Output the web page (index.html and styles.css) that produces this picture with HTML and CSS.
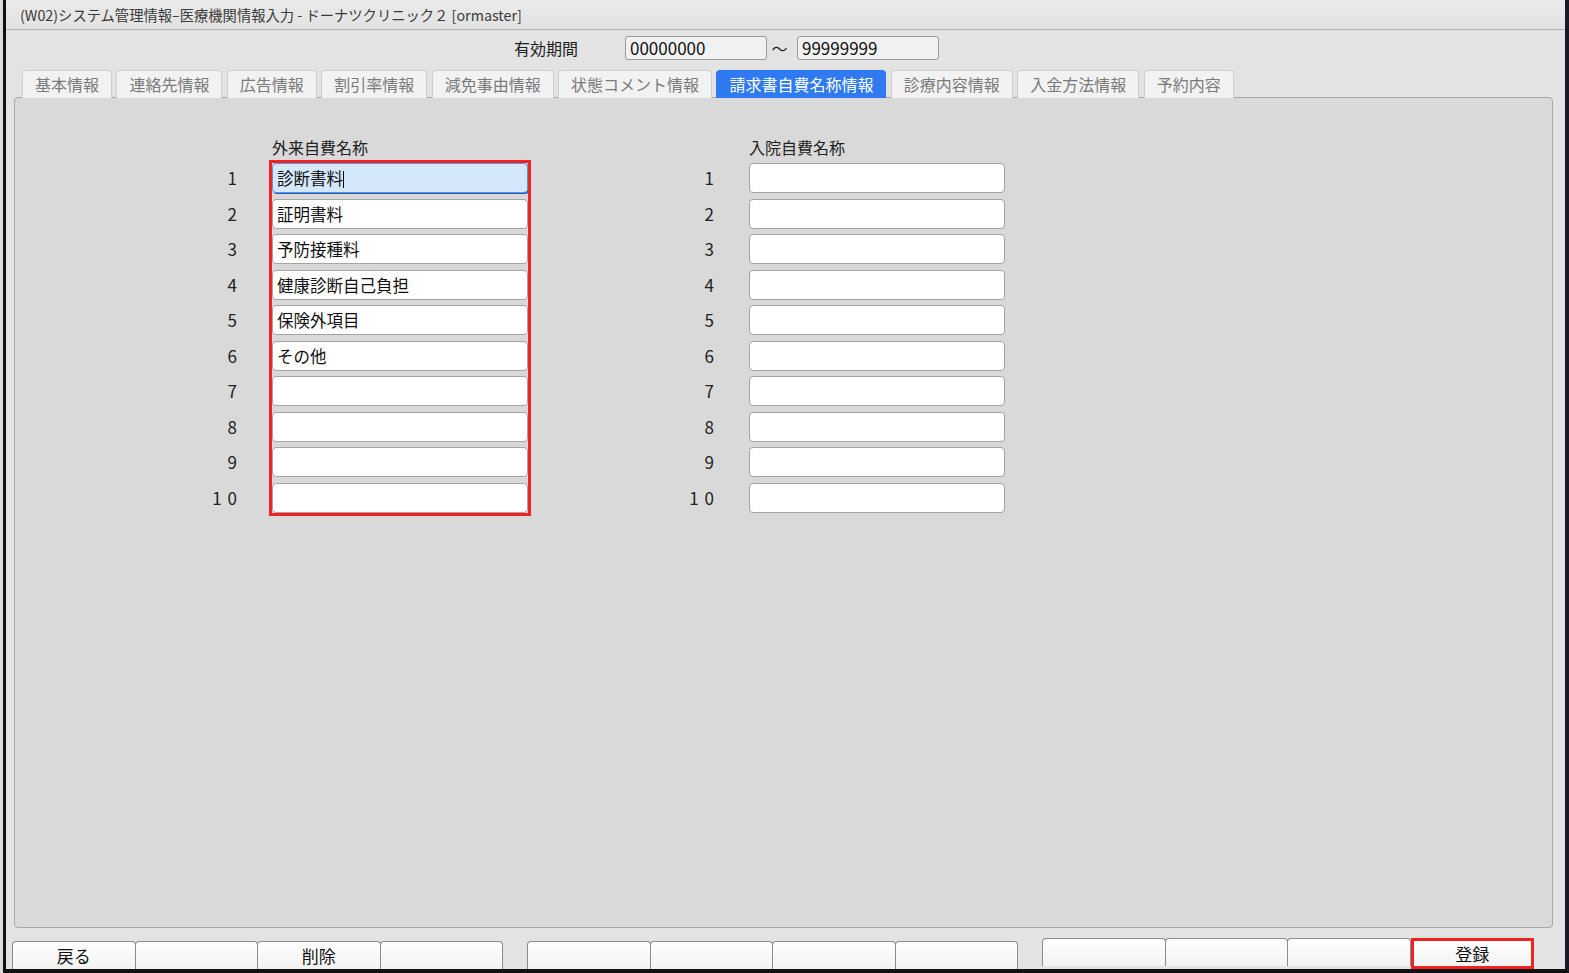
FILE: index.html
```html
<!DOCTYPE html>
<html lang="ja">
<head>
<meta charset="utf-8">
<title>(W02)システム管理情報–医療機関情報入力</title>
<link rel="stylesheet" href="styles.css">
</head>
<body>
<div class="window">
  <div class="titlebar">(W02)システム管理情報–医療機関情報入力 - ドーナツクリニック２ [ormaster]</div>
  <div class="period-row">
    <span class="period-label">有効期間</span>
    <div class="date-field">00000000</div>
    <span class="tilde">〜</span>
    <div class="date-field">99999999</div>
  </div>
  <div class="tabs">
    <div class="tab">基本情報</div>
    <div class="tab">連絡先情報</div>
    <div class="tab">広告情報</div>
    <div class="tab">割引率情報</div>
    <div class="tab">減免事由情報</div>
    <div class="tab">状態コメント情報</div>
    <div class="tab active">請求書自費名称情報</div>
    <div class="tab">診療内容情報</div>
    <div class="tab">入金方法情報</div>
    <div class="tab">予約内容</div>
  </div>
  <div class="panel">
    <div class="columns">
      <div class="column">
        <div class="col-head">外来自費名称</div>
        <div class="col-body">
          <div class="nums">
            <div class="num">1</div><div class="num">2</div><div class="num">3</div><div class="num">4</div><div class="num">5</div>
            <div class="num">6</div><div class="num">7</div><div class="num">8</div><div class="num">9</div><div class="num wide">10</div>
          </div>
          <div class="fields marked">
            <div class="field focus">診断書料<span class="caret"></span></div>
            <div class="field">証明書料</div>
            <div class="field">予防接種料</div>
            <div class="field">健康診断自己負担</div>
            <div class="field">保険外項目</div>
            <div class="field">その他</div>
            <div class="field"></div>
            <div class="field"></div>
            <div class="field"></div>
            <div class="field"></div>
          </div>
        </div>
      </div>
      <div class="column">
        <div class="col-head">入院自費名称</div>
        <div class="col-body">
          <div class="nums">
            <div class="num">1</div><div class="num">2</div><div class="num">3</div><div class="num">4</div><div class="num">5</div>
            <div class="num">6</div><div class="num">7</div><div class="num">8</div><div class="num">9</div><div class="num wide">10</div>
          </div>
          <div class="fields">
            <div class="field"></div>
            <div class="field"></div>
            <div class="field"></div>
            <div class="field"></div>
            <div class="field"></div>
            <div class="field"></div>
            <div class="field"></div>
            <div class="field"></div>
            <div class="field"></div>
            <div class="field"></div>
          </div>
        </div>
      </div>
    </div>
  </div>
  <div class="fkeys">
    <div class="fgroup">
      <div class="fbtn">戻る</div>
      <div class="fbtn"></div>
      <div class="fbtn">削除</div>
      <div class="fbtn"></div>
    </div>
    <div class="fgroup">
      <div class="fbtn"></div>
      <div class="fbtn"></div>
      <div class="fbtn"></div>
      <div class="fbtn"></div>
    </div>
    <div class="fgroup">
      <div class="fbtn"></div>
      <div class="fbtn"></div>
      <div class="fbtn"></div>
      <div class="fbtn marked-btn">登録</div>
    </div>
  </div>
</div>
</body>
</html>
```

FILE: styles.css
```css
* { box-sizing: border-box; }

html, body {
  margin: 0;
  padding: 0;
  background: #dcdcdc;
  font-family: "Noto Sans CJK JP", "Noto Sans", "Liberation Sans", sans-serif;
  color: #1e1e1e;
}

.window {
  margin-left: 3px;
  width: 1566px;
  height: 973px;
  border-left: 3px solid #111;
  border-right: 4px solid #1b1828;
  border-bottom: 4px solid #111;
  background: #e3e3e3;
  display: flex;
  flex-direction: column;
  overflow: hidden;
}

.titlebar {
  height: 30px;
  flex: none;
  padding-left: 14px;
  font-size: 14.3px;
  line-height: 29px;
  color: #3a3a3a;
  background: linear-gradient(#ebebeb, #e2e2e2);
  border-bottom: 1px solid #b4b4b4;
  white-space: nowrap;
}

.period-row {
  height: 40px;
  flex: none;
  display: flex;
  align-items: center;
  padding-left: 508px;
  padding-bottom: 5px;
}

.period-label {
  font-size: 16px;
  width: 111px;
}

.date-field {
  width: 142px;
  height: 24px;
  border: 1px solid #9c9c9c;
  border-radius: 3px;
  background: #f1f1f1;
  font-size: 17px;
  line-height: 22px;
  padding-left: 4px;
  color: #111;
}

.tilde {
  width: 30px;
  padding-right: 5px;
  text-align: center;
  font-size: 16px;
}

.tabs {
  flex: none;
  display: flex;
  gap: 4.4px;
  padding-left: 16px;
  height: 28px;
  position: relative;
  z-index: 1;
}

.tab {
  height: 28px;
  padding: 0 12px;
  font-size: 16px;
  line-height: 27px;
  color: #7a7a7a;
  background: #f2f2f2;
  border: 1px solid #cfcfcf;
  border-bottom: none;
  border-radius: 4px 4px 0 0;
  white-space: nowrap;
}

.tab.active {
  background: #2f7af0;
  border-color: #2f7af0;
  color: #fff;
}

.panel {
  flex: 1;
  margin: -1px 12px 0 8px;
  background: #d9d9d9;
  border: 1px solid #a8a8a8;
  border-radius: 4px;
  padding-top: 39px;
  padding-left: 162px;
}

.columns {
  display: flex;
  gap: 126px;
}

.column {
  display: flex;
  flex-direction: column;
}

.col-head {
  height: 20px;
  line-height: 20px;
  font-size: 16px;
  margin-left: 95px;
  margin-bottom: 6px;
  color: #222;
}

.col-body {
  display: flex;
  gap: 35px;
}

.nums {
  width: 60px;
  display: grid;
  grid-auto-rows: 30px;
  row-gap: 5.55px;
}

.num {
  text-align: right;
  font-size: 17px;
  line-height: 30px;
  color: #222;
}

.num.wide {
  letter-spacing: 6px;
  margin-right: -6px;
}

.fields {
  width: 256px;
  display: grid;
  grid-auto-rows: 30px;
  row-gap: 5.55px;
}

.fields.marked {
  outline: 3px solid #f02222;
  outline-offset: 0;
}

.field {
  background: #fff;
  border: 1px solid #a4a4a4;
  border-radius: 4px;
  font-size: 16.5px;
  line-height: 28px;
  padding-left: 4px;
  color: #111;
  white-space: nowrap;
}

.field.focus {
  background: #d4e7fb;
  border: 1px solid #5f93dc;
  box-shadow: 1px 1px 0 #1f5fc4;
}

.caret {
  display: inline-block;
  width: 1px;
  height: 17px;
  background: #000;
  vertical-align: -3px;
}

.fkeys {
  flex: none;
  height: 41px;
  display: flex;
  align-items: flex-end;
  gap: 25px;
  padding-left: 6px;
}

.fgroup {
  display: flex;
}

.fbtn {
  width: 123.5px;
  height: 28px;
  margin-right: -1px;
  background: linear-gradient(#ffffff, #f2f2f2);
  border: 1px solid #8c8c8c;
  border-bottom: none;
  border-radius: 4px 4px 0 0;
  text-align: center;
  font-size: 17px;
  line-height: 28px;
  color: #111;
}

.fbtn.marked-btn {
  border: 3px solid #f02222;
  border-radius: 0;
  height: 31px;
  line-height: 26px;
  margin-left: 1px;
}
```
